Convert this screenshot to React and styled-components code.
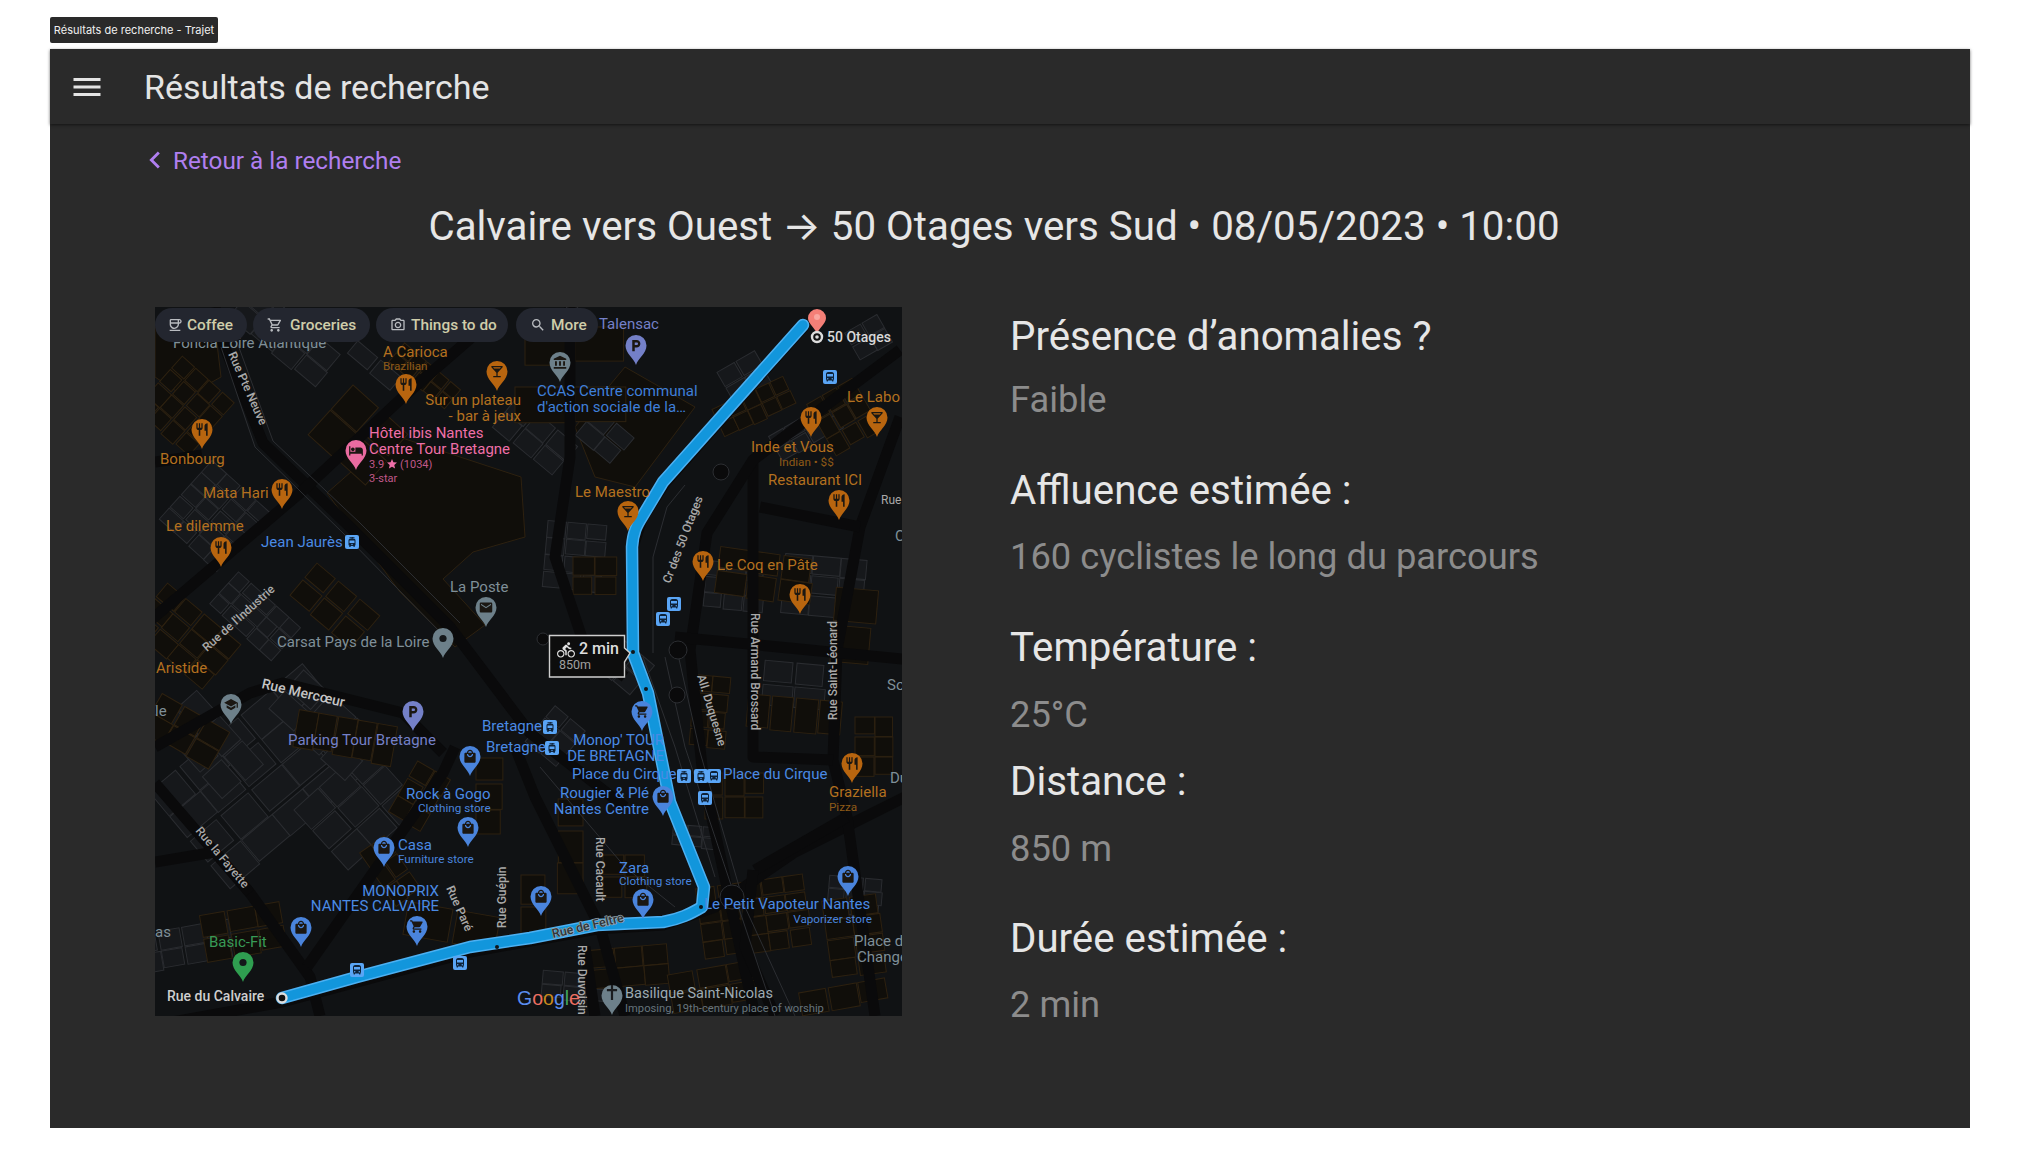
import React from "react";
import styled, { createGlobalStyle } from "styled-components";
import {
  MdRestaurant, MdLocalBar, MdLocalGroceryStore, MdLocalMall, MdLocalParking, MdAccountBalance,
  MdSchool, MdHotel, MdEmail, MdDirectionsBus, MdTram, MdSearch, MdOutlineCoffee,
  MdOutlineShoppingCart, MdOutlinePhotoCamera, MdDirectionsBike, MdStar, MdMenu, MdChevronLeft,
} from "react-icons/md";

const Global = createGlobalStyle`
  html, body { margin: 0; background: #fff; }
  body { font-family: Roboto, "Liberation Sans", sans-serif; }
`;
const Page = styled.div`
  width: 2020px; height: 1169px; box-sizing: border-box; padding: 17px 50px 0;
  display: flex; flex-direction: column; overflow: hidden;
`;
const Tag = styled.div`
  align-self: flex-start; width: 168px; height: 26px; box-sizing: border-box; display: flex; align-items: center; justify-content: center;
  background: #2a2a2a; border-radius: 2px; color: #f0f0f0; font: 400 11px Inter, sans-serif; margin-bottom: 6px;
`;
const Frame = styled.div`
  height: 1079px; background: #2a2a2a; display: flex; flex-direction: column;
`;
const AppBar = styled.header`
  height: 75px; flex: none; display: flex; align-items: center; padding-left: 19px; gap: 39px;
  box-shadow: 0 1px 3px rgba(0,0,0,.55); color: #e4e4e4;
`;
const BarTitle = styled.h1`
  margin: 0; font: 400 34px Roboto, sans-serif; color: #e4e4e4;
`;
const BackRow = styled.a`
  display: flex; align-items: center; gap: 1px; margin: 19px 0 0 88px; height: 34px; color: #b07ff0; font: 400 24.3px Roboto, sans-serif;
`;
const Heading = styled.h2`
  margin: 21px 32px 0 0; text-align: center; font: 400 40.3px/56px Roboto, sans-serif; color: #e6e6e6;
`;
const Arrow = styled.span`
  font-family: Inter, sans-serif;
`;
const Content = styled.main`
  display: flex; margin: 52px 0 0 105px; align-items: flex-start;
`;
const MapBox = styled.div`
  width: 747px; height: 709px; flex: none; background: #101214; overflow: hidden;
`;
const Details = styled.section`
  margin: 0 0 0 108px; padding-top: 5px;
`;
const Item = styled.div`
  margin-bottom: ${(p) => p.$gap}px;
`;
const Label = styled.h3`
  margin: 0; font: 400 40.25px/50px Roboto, sans-serif; color: #e6e6e6;
`;
const Value = styled.p`
  margin: ${(p) => p.$top}px 0 0; font: 400 36.3px/44px Roboto, sans-serif; color: #8c8c8c;
`;

/* ---------- map data ---------- */
const O = "#b8650f", OT = "#b3701f", B = "#4a84dc", BT = "#4a8ae4", P = "#7480c8", PT = "#7480c8", G = "#6d808a", GT = "#7f8f98";
const BROWN = "#2d2110";
const rnd = (() => { let s = 12345; return () => (s = (s * 16807) % 2147483647) / 2147483647; })();

const gridBlocks = [
  // gray
  [112, 470, -40, 5, 4, 40, 32, "g"], [205, 500, -42, 3, 3, 34, 28, "g"], [55, 440, 48, 3, 2, 34, 28, "g"],
  [170, 420, 42, 3, 2, 36, 28, "g"], [60, 210, 42, 4, 5, 20, 16, "g"],
  [30, 640, -10, 4, 2, 24, 20, "g"], [130, 30, 40, 4, 2, 28, 22, "g"], [220, 60, 40, 2, 1, 30, 18, "g"],
  [100, 310, 42, 5, 3, 17, 15, "g"], [670, 280, 5, 3, 3, 28, 20, "g"], [660, 120, -30, 5, 2, 18, 15, "g"],
  [420, 250, 5, 3, 4, 20, 17, "g"], [380, 130, 40, 3, 2, 26, 20, "g"], [640, 380, 5, 2, 2, 32, 24, "g"], [590, 70, -30, 2, 2, 22, 18, "g"],
  [580, 280, 5, 3, 3, 20, 16, "g"], [700, 590, 5, 3, 3, 18, 13, "g"], [540, 530, 5, 3, 2, 15, 11, "g"],
  [400, 430, 40, 2, 3, 20, 16, "g"], [420, 680, 5, 3, 2, 22, 14, "g"], [470, 360, 40, 2, 2, 24, 20, "g"],
  [715, 30, -30, 2, 2, 20, 16, "g"], [450, 130, 40, 2, 2, 24, 18, "g"],
  // brown
  [30, 100, 42, 4, 4, 18, 18, "b"], [30, 330, 40, 4, 3, 24, 20, "b"], [190, 432, 10, 5, 1, 20, 42, "b"], [270, 70, 40, 5, 2, 15, 13, "b"],
  [205, 130, 42, 2, 2, 40, 34, "b"], [180, 300, 40, 3, 2, 28, 22, "b"], [30, 425, 30, 3, 2, 26, 22, "b"],
  [265, 490, 30, 2, 3, 20, 20, "b"], [235, 565, 55, 3, 2, 22, 16, "b"], [90, 625, -10, 3, 2, 28, 24, "b"], [415, 540, 90, 3, 1, 32, 26, "b"],
  [380, 600, 0, 1, 2, 28, 32, "b"], [470, 570, 0, 2, 2, 22, 22, "b"], [475, 660, -5, 3, 2, 28, 20, "b"], [555, 405, 5, 2, 4, 18, 18, "b"],
  [600, 610, -8, 5, 4, 22, 18, "b"], [700, 630, -8, 2, 4, 28, 20, "b"], [600, 100, -25, 5, 2, 16, 16, "b"], [690, 110, -30, 3, 3, 18, 20, "b"],
  [640, 410, 5, 4, 1, 24, 38, "b"], [610, 270, 8, 3, 2, 32, 24, "b"], [700, 320, 5, 1, 2, 44, 38, "b"], [580, 490, 0, 3, 2, 20, 24, "b"],
  [720, 440, 0, 2, 3, 20, 20, "b"], [420, 100, 0, 2, 1, 60, 40, "b"], [420, 40, 0, 2, 1, 50, 40, "b"], [440, 270, 0, 2, 2, 22, 20, "b"],
  [300, 620, 10, 2, 1, 50, 34, "b"], [335, 490, 0, 1, 3, 28, 26, "b"], [560, 680, -10, 3, 2, 30, 20, "b"], [690, 690, -10, 3, 1, 30, 24, "b"],
];
const buildings = gridBlocks.flatMap(([cx, cy, rot, cols, rows, w, h, k]) => {
  const out = [];
  for (let c = 0; c < cols; c++) for (let r = 0; r < rows; r++) {
    const jw = w * (0.84 + rnd() * 0.16), jh = h * (0.84 + rnd() * 0.16);
    out.push({ x: (c - cols / 2) * w, y: (r - rows / 2) * h, w: jw, h: jh, cx, cy, rot, k });
  }
  return out;
});
const brownAreas = [
  "172,186 238,128 366,170 370,230 318,245 288,272 330,318 300,340 245,285",
  "0,20 60,20 66,70 30,90 0,70",
  "420,120 470,60 540,100 480,180 440,170",
];

const wideRoads = [
  "M60 0 L68 36 L108 136 L195 220 L295 320 L375 426 L470 500",
  "M-10 318 L145 186 L248 90 L340 10",
  "M0 440 L95 386 L128 376 L248 406 L288 446",
  "M0 476 L95 586 L155 670 L165 709",
  "M152 660 L288 466 L300 440",
  "M-10 720 L127 695 L315 645 L442 622 L508 618 L560 600 L640 545 L750 490",
  "M478 346 L478 240 L487 212 L510 176 L650 18",
  "M745 110 L705 220 L682 343 L678 453 L692 510 L720 709",
  "M605 200 L705 220",
  "M598 153 L598 450 L678 453",
  "M745 43 L598 153 L552 226 L535 343 L548 470 L600 709",
  "M0 155 L47 148",
  "M520 330 L748 352",
  "M415 0 L415 150 L400 250 L430 340 L470 370",
  "M0 555 L60 545 L95 586",
  "M440 709 L430 640",
  "M600 563 L692 510",
  "M470 709 L445 620 L380 490 L360 440",
  "M620 709 L590 640 L598 563",
];
const thinRoads = [
  "M82 35 L118 134 L205 216 L305 316",
  "M66 40 L100 140 L188 226 L290 330",
  "M498 346 L498 250 L512 200 L530 178",
  "M510 350 L530 440 L570 560 L620 709",
  "M524 352 L545 445 L590 600 L640 709",
  "M488 350 L520 440 L560 570",
  "M385 460 L470 560 L520 600",
];
const rings = [[523, 343, 9], [522, 388, 8], [577, 590, 12], [417, 10, 11], [388, 332, 6], [566, 165, 8]];

const route = "M127 691 L202 670 L315 640 L375 631 L442 618 L508 615 C525 612 535 607 547 600 L549 580 L515 495 L493 386 L478 346 L477 240 C478 225 482 218 487 210 L508 175 L648 18";

const Pin = ({ x, y, color, Icon, w = 21, h = 30, fg = "#1b1712", dot }) => {
  const r = w / 2, t = y - h, cy = t + r;
  const d = `M${x} ${y} C${x - 2} ${y - h * 0.22} ${x - r} ${cy + r * 0.75} ${x - r} ${cy} A${r} ${r} 0 1 1 ${x + r} ${cy} C${x + r} ${cy + r * 0.75} ${x + 2} ${y - h * 0.22} ${x} ${y}Z`;
  return (
    <g>
      <path d={d} fill={color} />
      {dot && <circle cx={x} cy={cy} r={3.6} fill="#14171a" />}
      {Icon && <g transform={`translate(${x - 7.5} ${cy - 7.5})`} color={fg}><Icon size={15} /></g>}
    </g>
  );
};
const Cross = () => (
  <svg width="15" height="15" viewBox="0 0 15 15"><path d="M6.4 0h2.2v4h4v2.2h-4V15H6.4V6.2h-4V4h4z" fill="#1a1c1f" /></svg>
);
const Transit = ({ x, y, Icon }) => (
  <g>
    <rect x={x - 7} y={y - 7} width={14} height={14} rx={2} fill="#5aa5f5" />
    <g transform={`translate(${x - 6} ${y - 6})`} color="#0e2238"><Icon size={12} /></g>
  </g>
);
const pins = [
  [47, 142, O, MdRestaurant], [251, 97, O, MdRestaurant], [127, 202, O, MdRestaurant], [66, 260, O, MdRestaurant], [342, 84, O, MdLocalBar],
  [201, 163, "#ea6ba0", MdHotel], [331, 320, G, MdEmail], [481, 58, P, MdLocalParking], [405, 75, G, MdAccountBalance],
  [656, 130, O, MdRestaurant], [684, 213, O, MdRestaurant], [645, 307, O, MdRestaurant], [548, 274, O, MdRestaurant],
  [722, 130, O, MdLocalBar], [473, 224, O, MdLocalBar], [76, 417, G, MdSchool], [258, 424, P, MdLocalParking],
  [315, 469, B, MdLocalMall], [313, 540, B, MdLocalMall], [229, 560, B, MdLocalMall], [146, 640, B, MdLocalMall],
  [262, 639, B, MdLocalGroceryStore], [487, 424, B, MdLocalGroceryStore], [508, 509, B, MdLocalMall], [488, 612, B, MdLocalMall],
  [386, 609, B, MdLocalMall], [693, 589, B, MdLocalMall], [697, 476, O, MdRestaurant],
];
const transits = [
  [675, 70, MdDirectionsBus], [519, 297, MdDirectionsBus], [508, 312, MdDirectionsBus], [202, 663, MdDirectionsBus], [305, 656, MdDirectionsBus],
  [197, 235, MdTram], [395, 420, MdTram], [397, 441, MdTram], [529, 469, MdTram], [546, 469, MdTram], [559, 469, MdDirectionsBus], [550, 491, MdDirectionsBus],
];
const labels = [
  ["Foncia Loire Atlantique", 18, 41, GT, 15],
  ["A Carioca", 228, 50, OT, 15], ["Brazilian", 228, 63, "#8f5a17", 11.7],
  ["Sur un plateau", 366, 98, OT, 15, "end"], ["- bar à jeux", 366, 114, OT, 15, "end"],
  ["Hôtel ibis Nantes", 214, 131, "#ef6fa8", 15], ["Centre Tour Bretagne", 214, 147, "#ef6fa8", 15],
  ["3-star", 214, 175, "#c0588a", 11], ["Bonbourg", 5, 157, OT, 15], ["Mata Hari", 48, 191, OT, 15], ["Le dilemme", 11, 224, OT, 15],
  ["Jean Jaurès", 106, 240, BT, 15], ["La Poste", 295, 285, GT, 15], ["Carsat Pays de la Loire", 122, 340, GT, 15],
  ["Talensac", 444, 22, PT, 15], ["CCAS Centre communal", 382, 89, "#3f7fd9", 15], ["d'action sociale de la…", 382, 105, "#3f7fd9", 15],
  ["Le Labo", 692, 95, OT, 15], ["Inde et Vous", 596, 145, OT, 15], ["Indian • $$", 624, 159, "#8f5a17", 11.7], ["Restaurant ICI", 613, 178, OT, 15],
  ["Rue", 726, 197, "#a8a8a8", 12], ["Le Maestro", 420, 190, OT, 15], ["Le Coq en Pâte", 562, 263, OT, 15],
  ["Aristide", 1, 366, OT, 15], ["le", 0, 409, GT, 15], ["Parking Tour Bretagne", 133, 438, PT, 15],
  ["Bretagne", 327, 424, BT, 15], ["Bretagne", 331, 445, BT, 15], ["Rock à Gogo", 251, 492, BT, 15], ["Clothing store", 263, 505, B, 11.7],
  ["Casa", 243, 543, BT, 15], ["Furniture store", 243, 556, B, 11.7], ["MONOPRIX", 284, 589, BT, 15, "end"], ["NANTES CALVAIRE", 284, 604, BT, 15, "end"],
  ["as", 0, 630, GT, 15], ["Basic-Fit", 54, 640, "#389a56", 15],
  ["Monop' TOUR", 509, 438, BT, 15, "end"], ["DE BRETAGNE", 509, 454, BT, 15, "end"], ["Place du Cirque", 417, 472, BT, 15], ["Place du Cirque", 568, 472, BT, 15],
  ["Rougier & Plé", 494, 491, BT, 15, "end"], ["Nantes Centre", 494, 507, BT, 15, "end"], ["Graziella", 674, 490, OT, 15], ["Pizza", 674, 504, "#8f5a17", 11.7],
  ["Du", 735, 476, GT, 15], ["So", 732, 383, GT, 15], ["C", 740, 234, GT, 15], ["Zara", 464, 566, BT, 15], ["Clothing store", 464, 578, B, 11.7],
  ["Le Petit Vapoteur Nantes", 549, 602, BT, 15], ["Vaporizer store", 717, 616, B, 11.7, "end"], ["Place de", 699, 639, GT, 15], ["Change", 702, 655, GT, 15],
  ["Basilique Saint-Nicolas", 470, 691, "#9dabb3", 14.5], ["Imposing, 19th-century place of worship", 470, 705, "#66747c", 11.2],
];
const streets = [
  ["Rue Pte Neuve", 73, 47, 66], ["Rue de l'Industrie", 52, 345, -42], ["Cr des 50 Otages", 515, 277, -69], ["Rue Armand Brossard", 596, 306, 90],
  ["Rue Saint-Léonard", 682, 413, -90], ["All. Duquesne", 542, 369, 73], ["Rue la Fayette", 40, 524, 50], ["Rue Paré", 291, 581, 66],
  ["Rue Guépin", 351, 621, -90], ["Rue Cacault", 441, 530, 90], ["Rue Duvoisin", 423, 638, 90],
];
const chips = [
  [0, 92, "Coffee", MdOutlineCoffee, 12, 32], [98, 117, "Groceries", MdOutlineShoppingCart, 14, 37], [221, 132, "Things to do", MdOutlinePhotoCamera, 14, 35], [361, 82, "More", MdSearch, 14, 35],
];
const googleLetters = [["G", "#5b8def"], ["o", "#ee6f62"], ["o", "#c98a1e"], ["g", "#5b8def"], ["l", "#41a85f"], ["e", "#ee6f62"]];

const RouteMap = () => (
  <svg width="747" height="709" viewBox="0 0 747 709" fontFamily="Roboto, sans-serif" style={{ display: "block" }}>
    <rect width="747" height="709" fill="#101214" />
    <g fill="#100e0a" stroke={BROWN}>
      {brownAreas.map((p) => <polygon key={p} points={p} />)}
    </g>
    <g strokeWidth="1">
      {buildings.map((b, i) => (
        <rect key={i} x={b.x} y={b.y} width={b.w} height={b.h} transform={`translate(${b.cx} ${b.cy}) rotate(${b.rot})`}
          fill={b.k === "g" ? "#16181b" : "#100e0a"} stroke={b.k === "g" ? "#2a2c30" : BROWN} />
      ))}
    </g>
    <g fill="none" strokeLinejoin="round" stroke="#0a0a0b" strokeWidth="11">
      {wideRoads.map((d, i) => <path key={i} d={d} />)}
    </g>
    <g fill="none" stroke="#2c2e32" strokeWidth="1">
      {thinRoads.map((d, i) => <path key={i} d={d} />)}
    </g>
    <g fill="#0a0a0b" stroke="#2c2e32">
      {rings.map(([x, y, r], i) => <circle key={i} cx={x} cy={y} r={r} />)}
    </g>
    <g>
      {labels.filter((l) => l[0] === "Foncia Loire Atlantique").map((l) => <text key={l[0]} x={l[1]} y={l[2]} fill={l[3]} fontSize={l[4]}>{l[0]}</text>)}
    </g>
    <path d={route} fill="none" stroke="#4cb0f2" strokeWidth="12.5" strokeLinejoin="round" strokeLinecap="round" />
    <path d={route} fill="none" stroke="#1296dc" strokeWidth="9.5" strokeLinejoin="round" strokeLinecap="round" />
    {[[342, 640], [478, 345], [491, 382], [546, 600]].map(([x, y]) => <circle key={x} cx={x} cy={y} r="2" fill="#10161a" />)}
    {pins.map(([x, y, c, I], i) => <Pin key={i} x={x} y={y} color={c} Icon={I} />)}
    <Pin x={288} y={351} color={G} dot />
    <Pin x={88} y={675} color="#2f9e50" dot />
    <Pin x={457} y={708} color={G} />
    <g transform="translate(449.5 678)"><Cross /></g>
    {transits.map(([x, y, I], i) => <Transit key={i} x={x} y={y} Icon={I} />)}
    <g>
      {labels.slice(1).map((l, i) => (
        <text key={i} x={l[1]} y={l[2]} fill={l[3]} fontSize={l[4]} textAnchor={l[5] || "start"}>{l[0]}</text>
      ))}
      <text x={214} y={161} fill="#c0588a" fontSize="11">3.9</text>
      <g transform="translate(231 151)" color="#ef6fa8"><MdStar size={12} /></g>
      <text x={245} y={161} fill="#c0588a" fontSize="11">(1034)</text>
    </g>
    <g fill="#a9a9a9" fontSize="12" fontWeight="500">
      {streets.map(([t, x, y, r]) => <text key={t} transform={`translate(${x} ${y}) rotate(${r})`}>{t}</text>)}
    </g>
    <text transform="translate(106 381) rotate(13)" fontSize="14" fontWeight="500" fill="#c4c4c4">Rue Mercœur</text>
    <text transform="translate(398 631) rotate(-13)" fontSize="12.5" fontWeight="500" fill="#2f353a" stroke="#96a6af" strokeWidth="1.4" paintOrder="stroke">Rue de Feltre</text>

    <path d="M662 28 C661 21 653 17 653 11 A9 9 0 1 1 671 11 C671 17 663 21 662 28Z" fill="#f47f77" />
    <circle cx="662" cy="10" r="3" fill="#f9a69f" />
    <circle cx="662" cy="30" r="5" fill="#111" stroke="#ddd" strokeWidth="2.4" />
    <circle cx="662" cy="30" r="1.8" fill="#ddd" />
    <text x="672" y="35" fontSize="14" fontWeight="500" fill="#d8d8d8">50 Otages</text>
    <circle cx="127" cy="691" r="4.5" fill="#111" stroke="#ddd" strokeWidth="2.4" />
    <text x="12" y="694" fontSize="14" fontWeight="500" fill="#cfcfcf">Rue du Calvaire</text>

    <path d="M394.5 328.5 H469.5 V341 L475 346 L469.5 355 V370 H394.5 Z" fill="#0d0d0d" stroke="#cfcfcf" strokeWidth="1.4" />
    <g transform="translate(402 334)" color="#e0e0e0"><MdDirectionsBike size={18} /></g>
    <text x="424" y="347" fontSize="16" fontWeight="500" fill="#dedede">2 min</text>
    <text x="404" y="362" fontSize="12.5" fill="#a0a0a0">850m</text>

    <text x="362" y="698" fontSize="19.5" fontWeight="500" fontFamily="'Liberation Sans', sans-serif">
      {googleLetters.map(([c, col], i) => <tspan key={i} fill={col}>{c}</tspan>)}
    </text>

    {chips.map(([x, w, t, I, ix, tx]) => (
      <g key={t}>
        <rect x={x} y={1} width={w} height={34} rx={17} fill="#23262f" />
        <g transform={`translate(${x + ix} 10)`} color="#b9bcc0"><I size={16} /></g>
        <text x={x + tx} y={23} fontSize="15.4" fontWeight="500" fill="#cfcdaa">{t}</text>
      </g>
    ))}
  </svg>
);

const rows = [
  ["Présence d’anomalies ?", "Faible", 15.5, 44],
  ["Affluence estimée :", "160 cyclistes le long du parcours", 19, 44],
  ["Température :", "25°C", 20, 20],
  ["Distance :", "850 m", 20, 43],
  ["Durée estimée :", "2 min", 19, 0],
];

export default function App() {
  return (
    <>
      <Global />
      <Page>
        <Tag>Résultats de recherche - Trajet</Tag>
        <Frame>
          <AppBar>
            <MdMenu size={36} />
            <BarTitle>Résultats de recherche</BarTitle>
          </AppBar>
          <BackRow><MdChevronLeft size={34} />Retour à la recherche</BackRow>
          <Heading>Calvaire vers Ouest <Arrow>→</Arrow> 50 Otages vers Sud • 08/05/2023 • 10:00</Heading>
          <Content>
            <MapBox><RouteMap /></MapBox>
            <Details>
              {rows.map(([l, v, top, gap]) => (
                <Item key={l} $gap={gap}>
                  <Label>{l}</Label>
                  <Value $top={top}>{v}</Value>
                </Item>
              ))}
            </Details>
          </Content>
        </Frame>
      </Page>
    </>
  );
}
